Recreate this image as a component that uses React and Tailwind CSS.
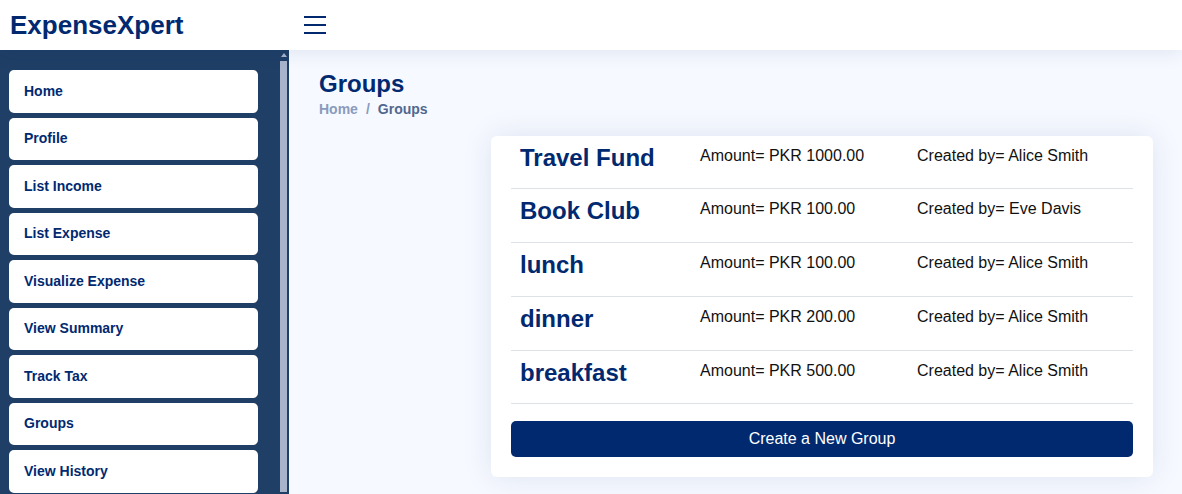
import { useState } from "react";

const navItems = [
  "Home",
  "Profile",
  "List Income",
  "List Expense",
  "Visualize Expense",
  "View Summary",
  "Track Tax",
  "Groups",
  "View History",
];

const groups = [
  { name: "Travel Fund", amount: "1000.00", createdBy: "Alice Smith" },
  { name: "Book Club", amount: "100.00", createdBy: "Eve Davis" },
  { name: "lunch", amount: "100.00", createdBy: "Alice Smith" },
  { name: "dinner", amount: "200.00", createdBy: "Alice Smith" },
  { name: "breakfast", amount: "500.00", createdBy: "Alice Smith" },
];

const Header = () => (
  <header className="relative z-10 flex h-[50px] shrink-0 items-center bg-white shadow-[0_2px_20px_rgba(1,41,112,0.1)]">
    <div className="w-[304px] pl-[10px] text-[26px] font-bold leading-none text-[#012970]">ExpenseXpert</div>
    <button className="flex h-[22px] w-[22px] flex-col justify-center gap-[6px]" aria-label="Toggle sidebar">
      <span className="block h-[2px] w-[22px] bg-[#012970]" />
      <span className="block h-[2px] w-[22px] bg-[#012970]" />
      <span className="block h-[2px] w-[22px] bg-[#012970]" />
    </button>
  </header>
);

const Sidebar = ({ active }) => (
  <aside className="flex w-[289px] shrink-0 bg-[#1f3f66]">
    <nav className="flex flex-1 flex-col gap-[5px] overflow-hidden pl-[9px] pt-[20px]">
      {navItems.map((item) => (
        <a
          key={item}
          href="#"
          aria-current={active === item ? "page" : undefined}
          className="flex h-[42.5px] w-[249px] shrink-0 items-center rounded-[5px] bg-white pl-[15px] text-[14px] font-bold text-[#012970]"
        >
          {item}
        </a>
      ))}
    </nav>
    <div className="mr-[2px] flex w-[7px] flex-col items-center pt-[3px]">
      <div className="h-0 w-0 border-x-[3.5px] border-b-[4px] border-x-transparent border-b-[#a8b4cc]" />
      <div className="mb-[2px] mt-[4px] w-full flex-1 bg-[#a8b4cc]" />
    </div>
  </aside>
);

const GroupRow = ({ group }) => (
  <div className="flex h-[53.7px] items-start border-b border-[#dee2e6] pt-[4px]">
    <div className="w-[189px] pl-[9px] text-[24px] font-bold leading-[36px] text-[#012970]">{group.name}</div>
    <div className="mt-[4px] w-[217px] text-[16px] leading-[24px] text-[#111]">Amount= PKR {group.amount}</div>
    <div className="mt-[4px] text-[16px] leading-[24px] text-[#111]">Created by= {group.createdBy}</div>
  </div>
);

export default function App() {
  const [active] = useState("Groups");

  return (
    <div className="flex h-screen flex-col overflow-hidden font-['Liberation_Sans',Arial,sans-serif]">
      <Header />
      <div className="flex min-h-0 flex-1">
        <Sidebar active={active} />
        <main className="flex flex-1 flex-col bg-[#f6f9ff] pl-[30px] pr-[29px] pt-[20px]">
          <h1 className="text-[24px] font-bold leading-[28.8px] text-[#012970]">Groups</h1>
          <div className="flex gap-[8px] text-[14px] font-bold leading-[21px]">
            <span className="text-[#899bbd]">Home</span>
            <span className="text-[#899bbd]">/</span>
            <span className="text-[#51678f]">Groups</span>
          </div>
          <section className="ml-auto mt-[16px] w-[662px] rounded-[6px] bg-white px-[20px] pb-[20px] shadow-[0_0_30px_rgba(1,41,112,0.1)]">
            {groups.map((group) => (
              <GroupRow key={group.name} group={group} />
            ))}
            <button className="mt-[16.5px] h-[36px] w-full rounded-[5px] bg-[#012970] text-[16px] text-white">
              Create a New Group
            </button>
          </section>
        </main>
      </div>
    </div>
  );
}
